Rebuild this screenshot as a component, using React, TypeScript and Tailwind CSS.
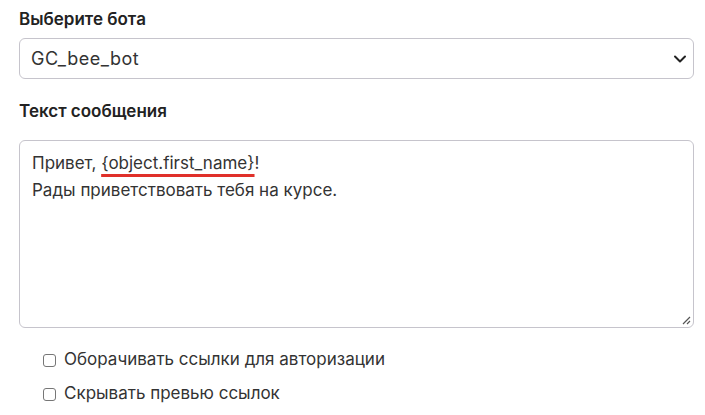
import React from "react";

const Check = ({ label }: { label: string }) => (
  <label className="flex h-[34px] items-center gap-[8px] text-[17px] text-[#333]">
    <span className="h-[13px] w-[13px] rounded-[3px] border border-[#767676] bg-white" />
    <span>{label}</span>
  </label>
);

const App = () => {
  return (
    <div
      className="flex w-[705px] flex-col bg-white pl-[19px] pr-[11px] pt-[6px] text-[#222]"
      style={{ fontFamily: "Inter, 'Noto Sans', sans-serif" }}
    >
      <p className="text-[17px] font-semibold leading-[26px]">{"Выберите бота"}</p>
      <div className="mt-[6px] flex h-[41px] items-center justify-between rounded-[6px] border border-[#c6c4cc] pl-[11px] pr-[6px]">
        <span className="text-[18px] tracking-[0.5px] text-[#333]">{"GC_bee_bot"}</span>
        <svg width="14" height="10" viewBox="0 0 16 12" className="text-[#222]">
          <path d="M2 3l6 6 6-6" fill="none" stroke="currentColor" strokeWidth="2.4" strokeLinecap="round" strokeLinejoin="round" />
        </svg>
      </div>
      <p className="mt-[19px] text-[17px] font-semibold leading-[26px]">{"Текст сообщения"}</p>
      <div className="relative mt-[16px] h-[188px] rounded-[6px] border border-[#c6c4cc] px-[12px] pb-[6px] pt-[9px] text-[17px] leading-[27px] text-[#333]">
        <p>
          {"Привет, "}
          <span className="underline decoration-[#e0302a] decoration-[3px] underline-offset-[5px]">
            {"{object.first_name}"}
          </span>
          {"!"}
        </p>
        <p>{"Рады приветствовать тебя на курсе."}</p>
        <svg width="10" height="10" viewBox="0 0 10 10" className="absolute bottom-[2px] right-[2px]">
          <path d="M9 2L2 9M9 6L6 9" stroke="#555" strokeWidth="1.2" />
        </svg>
      </div>
      <div className="mt-[15px] flex flex-col pl-[24px]">
        <Check label="Оборачивать ссылки для авторизации" />
        <Check label="Скрывать превью ссылок" />
      </div>
    </div>
  );
};

export default App;
